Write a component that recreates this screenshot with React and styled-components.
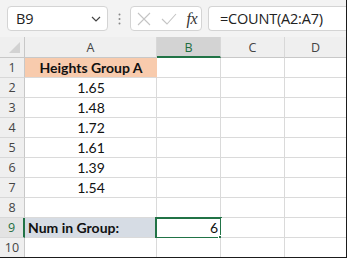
import React from "react";
import styled, { createGlobalStyle } from "styled-components";

const Global = createGlobalStyle`
  html, body { margin: 0; padding: 0; background: #fff; }
  * { box-sizing: border-box; }
`;

const Frame = styled.div`
  width: 347px;
  height: 258px;
  overflow: hidden;
  border-right: 1px solid #1b1b1b;
  border-bottom: 1px solid #1b1b1b;
  background: #fff;
  display: flex;
  flex-direction: column;
`;

const Toolbar = styled.div`
  height: 37px;
  flex: none;
  background: #f3f3f3;
  display: flex;
  align-items: center;
  padding: 0 0 0 7px;
  overflow: hidden;
`;

const Box = styled.div`
  height: 25px;
  background: #fff;
  border: 1px solid #d4d4d4;
  border-radius: 4px;
  display: flex;
  align-items: center;
  flex: none;
`;

const NameBox = styled(Box)`
  width: 101px;
  padding: 0 6px 0 8px;
  justify-content: space-between;
  font-family: "Open Sans", "Noto Sans", sans-serif;
  font-size: 14.5px;
  color: #222;
`;

const Dots = styled.div`
  width: 22px;
  display: flex;
  justify-content: center;
  flex: none;
`;

const FxBox = styled(Box)`
  width: 72px;
  padding: 0 4px 0 6px;
  justify-content: space-between;
`;

const Fx = styled.span`
  font-family: "Liberation Serif", "DejaVu Serif", serif;
  font-style: italic;
  font-size: 16px;
  color: #333;
  letter-spacing: -0.5px;
`;

const FormulaBox = styled(Box)`
  margin-left: 6px;
  width: 160px;
  border-radius: 4px 0 0 4px;
  border-right: none;
  padding-left: 11px;
  font-family: "Open Sans", "Noto Sans", sans-serif;
  font-size: 14.5px;
  letter-spacing: -0.2px;
  color: #222;
  white-space: nowrap;
`;

const Grid = styled.div`
  display: grid;
  grid-template-columns: 25px 132px 64px 64px 62px;
  grid-template-rows: 21px repeat(10, 20px);
  flex: none;
`;

const Corner = styled.div`
  background: #efefef;
  border-right: 1px solid #c8c8c8;
  border-bottom: 1px solid #c8c8c8;
  display: flex;
  align-items: flex-end;
  justify-content: flex-end;
  padding: 0 4px 4px 0;
`;

const ColHead = styled.div`
  background: ${(p) => (p.$sel ? "#d3d3d3" : "#efefef")};
  border-right: 1px solid #d8d8d8;
  border-bottom: ${(p) => (p.$sel ? "2px solid #217346" : "1px solid #c8c8c8")};
  color: ${(p) => (p.$sel ? "#1e6e41" : "#444")};
  font-family: "Open Sans", "Noto Sans", sans-serif;
  font-size: 12.5px;
  display: flex;
  align-items: center;
  justify-content: center;
  padding-top: ${(p) => (p.$sel ? "1px" : "0")};
`;

const RowHead = styled.div`
  background: ${(p) => (p.$sel ? "#e3e3e3" : "#efefef")};
  border-right: ${(p) => (p.$sel ? "2px solid #217346" : "1px solid #c8c8c8")};
  border-bottom: 1px solid #d8d8d8;
  color: ${(p) => (p.$sel ? "#1e6e41" : "#444")};
  font-family: "Open Sans", "Noto Sans", sans-serif;
  font-size: 12.5px;
  display: flex;
  align-items: center;
  justify-content: center;
`;

const Cell = styled.div`
  position: relative;
  background: ${(p) => p.$fill || "#fff"};
  border-right: 1px solid ${(p) => (p.$fill ? p.$fill : "#dadada")};
  border-bottom: 1px solid #dadada;
  font-family: Lato, "Liberation Sans", sans-serif;
  font-size: 14px;
  font-weight: ${(p) => (p.$bold ? 700 : 400)};
  color: #111;
  display: flex;
  align-items: center;
  justify-content: ${(p) =>
    p.$align === "left" ? "flex-start" : p.$align === "right" ? "flex-end" : "center"};
  padding: 0 2px 0 3px;
  white-space: nowrap;
`;

const Selection = styled.div`
  position: absolute;
  left: -2px;
  top: -1px;
  right: -2px;
  bottom: -2px;
  border: 2px solid #217346;
  pointer-events: none;
`;

const Handle = styled.div`
  position: absolute;
  right: -4px;
  bottom: -4px;
  width: 6px;
  height: 6px;
  background: #217346;
  border: 1px solid #fff;
`;

const CellText = styled.span`
  position: relative;
`;

const Chevron = () => (
  <svg width="10" height="6" viewBox="0 0 10 6">
    <path d="M1 1 L5 5 L9 1" fill="none" stroke="#444" strokeWidth="1.2" />
  </svg>
);

const VDots = () => (
  <svg width="3" height="12" viewBox="0 0 3 12">
    <circle cx="1.5" cy="1.5" r="1" fill="#888" />
    <circle cx="1.5" cy="6" r="1" fill="#888" />
    <circle cx="1.5" cy="10.5" r="1" fill="#888" />
  </svg>
);

const XIcon = () => (
  <svg width="14" height="14" viewBox="0 0 14 14">
    <path d="M1 1 L13 13 M13 1 L1 13" stroke="#c4c4c4" strokeWidth="1.1" />
  </svg>
);

const CheckIcon = () => (
  <svg width="16" height="12" viewBox="0 0 16 12">
    <path d="M1 6 L6 11 L15 1" fill="none" stroke="#c4c4c4" strokeWidth="1.1" />
  </svg>
);

const Triangle = () => (
  <svg width="11" height="11" viewBox="0 0 11 11">
    <path d="M11 0 L11 11 L0 11 Z" fill="#d2d2d2" />
  </svg>
);

const rows = [
  { a: "Heights Group A", aFill: "#f8cbad", aBold: true },
  { a: "1.65" },
  { a: "1.48" },
  { a: "1.72" },
  { a: "1.61" },
  { a: "1.39" },
  { a: "1.54" },
  { a: "" },
  { a: "Num in Group:", aFill: "#d6dce4", aBold: true, aAlign: "left", b: "6", sel: true },
  { a: "" },
];

export default function App() {
  return (
    <>
      <Global />
      <Frame>
        <Toolbar>
          <NameBox>
            <span>B9</span>
            <Chevron />
          </NameBox>
          <Dots>
            <VDots />
          </Dots>
          <FxBox>
            <XIcon />
            <CheckIcon />
            <Fx>fx</Fx>
          </FxBox>
          <FormulaBox>=COUNT(A2:A7)</FormulaBox>
        </Toolbar>
        <Grid>
          <Corner>
            <Triangle />
          </Corner>
          <ColHead>A</ColHead>
          <ColHead $sel>B</ColHead>
          <ColHead>C</ColHead>
          <ColHead>D</ColHead>
          {rows.map((r, i) => (
            <React.Fragment key={i}>
              <RowHead $sel={r.sel}>{i + 1}</RowHead>
              <Cell $fill={r.aFill} $bold={r.aBold} $align={r.aAlign}>
                {r.a}
              </Cell>
              <Cell $align="right">
                {r.b && <CellText>{r.b}</CellText>}
                {r.sel && (
                  <Selection>
                    <Handle />
                  </Selection>
                )}
              </Cell>
              <Cell />
              <Cell />
            </React.Fragment>
          ))}
        </Grid>
      </Frame>
    </>
  );
}
